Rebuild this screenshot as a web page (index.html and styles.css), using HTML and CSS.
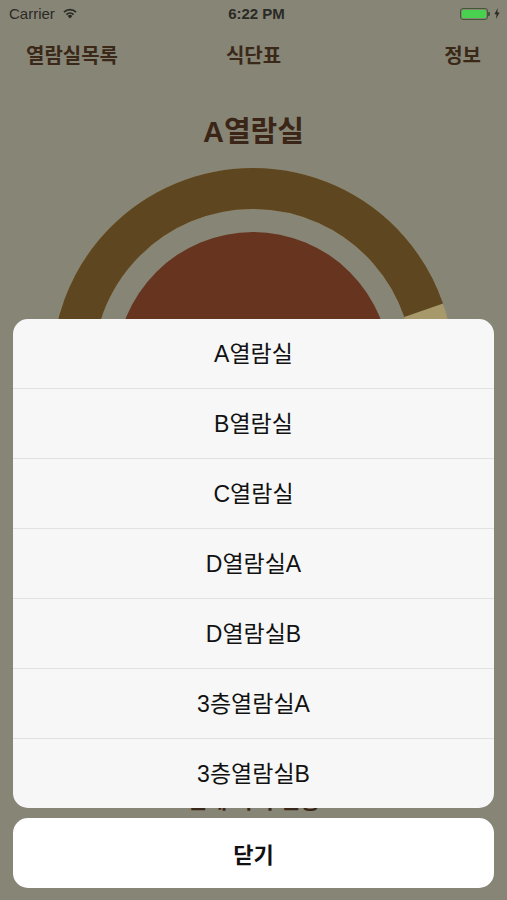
FILE: index.html
```html
<!DOCTYPE html>
<html lang="ko">
<head>
<meta charset="utf-8">
<title>열람실</title>
<link rel="stylesheet" href="styles.css">
</head>
<body>
<div class="screen">
  <div class="status">
    <div class="status-left">
      <span class="carrier">Carrier</span>
      <svg class="wifi" width="16" height="12" viewBox="0 0 15 11">
        <path d="M7.5 10.6 L5.3 8.2 A3.2 3.2 0 0 1 9.7 8.2 Z" fill="#2a2a26"/>
        <path d="M3.6 6.4 A5.6 5.6 0 0 1 11.4 6.4 L10.3 7.5 A4.1 4.1 0 0 0 4.7 7.5 Z" fill="#2a2a26"/>
        <path d="M1.3 4.1 A8.8 8.8 0 0 1 13.7 4.1 L12.6 5.3 A7.2 7.2 0 0 0 2.4 5.3 Z" fill="#2a2a26"/>
      </svg>
    </div>
    <div class="time">6:22 PM</div>
    <div class="status-right">
      <div class="battery"><div class="battery-fill"></div></div>
      <div class="battery-tip"></div>
      <svg class="bolt" width="6" height="11" viewBox="0 0 6 11"><path d="M3.8 0 L0.4 6.2 H2.6 L1.9 11 L5.6 4.6 H3.3 Z" fill="#2a2a26"/></svg>
    </div>
  </div>

  <div class="nav">
    <span class="nav-item nav-left">열람실목록</span>
    <span class="nav-item nav-center">식단표</span>
    <span class="nav-item nav-right">정보</span>
  </div>

  <h1 class="title">A열람실</h1>

  <div class="chart">
    <svg width="402" height="402" viewBox="0 0 402 402">
      <circle cx="201" cy="201" r="180.5" fill="none" stroke="#a7996a" stroke-width="41"/>
      <path d="M 371.67 142.23 A 180.5 180.5 0 1 0 291.25 357.32" fill="none" stroke="#5e4621" stroke-width="41"/>
      <circle cx="201" cy="201" r="137" fill="#67351f"/>
    </svg>
  </div>

  <div class="under">전체 좌석 현황</div>

  <div class="overlay">
    <div class="sheet">
      <div class="sheet-row">A열람실</div>
      <div class="sheet-row">B열람실</div>
      <div class="sheet-row">C열람실</div>
      <div class="sheet-row">D열람실A</div>
      <div class="sheet-row">D열람실B</div>
      <div class="sheet-row">3층열람실A</div>
      <div class="sheet-row">3층열람실B</div>
    </div>
    <div class="cancel">닫기</div>
  </div>
</div>
</body>
</html>
```

FILE: styles.css
```css
html, body {
  margin: 0;
  padding: 0;
}

body {
  background: #878576;
  font-family: "Liberation Sans", "Noto Sans CJK KR", sans-serif;
}

.screen {
  position: relative;
  width: 507px;
  height: 900px;
  overflow: hidden;
  background: #878576;
}

.status {
  height: 27px;
  display: flex;
  align-items: center;
  justify-content: space-between;
  padding: 0 7px 0 9px;
  color: #2a2a26;
  font-size: 15px;
}

.status-left {
  display: flex;
  align-items: center;
  gap: 7px;
  width: 120px;
}

.wifi {
  margin-top: -2px;
}

.time {
  font-weight: 700;
  font-size: 15px;
  margin-left: 4px;
}

.status-right {
  display: flex;
  align-items: center;
  justify-content: flex-end;
  width: 120px;
}

.battery {
  width: 28px;
  height: 12px;
  border: 1px solid #3f5a33;
  border-radius: 3px;
  padding: 1px;
  box-sizing: border-box;
}

.battery-fill {
  width: 100%;
  height: 100%;
  background: #47d14f;
  border-radius: 1.5px;
}

.battery-tip {
  width: 2px;
  height: 4px;
  background: #3f5a33;
  border-radius: 0 1px 1px 0;
  margin-right: 4px;
}

.nav {
  height: 55px;
  display: grid;
  grid-template-columns: 1fr auto 1fr;
  align-items: center;
  padding: 0 26px;
}

.nav-item {
  font-family: "Noto Sans CJK KR", sans-serif;
  font-weight: 700;
  font-size: 20px;
  color: #3a2818;
}

.nav-left {
  justify-self: start;
}

.nav-center {
  justify-self: center;
}

.nav-right {
  justify-self: end;
}

.title {
  margin: 32px 0 0;
  height: 36px;
  line-height: 36px;
  text-align: center;
  font-size: 29px;
  font-weight: 700;
  color: #3b2516;
}

.chart {
  margin-top: 18px;
  display: flex;
  justify-content: center;
  padding-right: 1px;
}

.chart svg {
  display: block;
}

.under {
  margin-top: 218px;
  text-align: center;
  font-size: 22px;
  line-height: 26px;
  font-weight: 700;
  color: #3a2818;
}

.overlay {
  position: absolute;
  left: 0;
  right: 0;
  bottom: 0;
  padding: 0 13px 12px;
  display: flex;
  flex-direction: column;
  gap: 10px;
}

.sheet {
  background: #f7f7f7;
  border-radius: 15px;
  overflow: hidden;
}

.sheet-row {
  height: 69px;
  box-sizing: border-box;
  padding-bottom: 3px;
  display: flex;
  align-items: center;
  justify-content: center;
  font-size: 23px;
  color: #111;
  border-top: 1px solid #e1e1e1;
}

.sheet-row:first-child {
  height: 69px;
  border-top: none;
}

.sheet-row + .sheet-row {
  height: 70px;
}

.cancel {
  height: 70px;
  background: #ffffff;
  border-radius: 15px;
  display: flex;
  align-items: center;
  justify-content: center;
  font-size: 22px;
  font-weight: 700;
  color: #111;
}
```
